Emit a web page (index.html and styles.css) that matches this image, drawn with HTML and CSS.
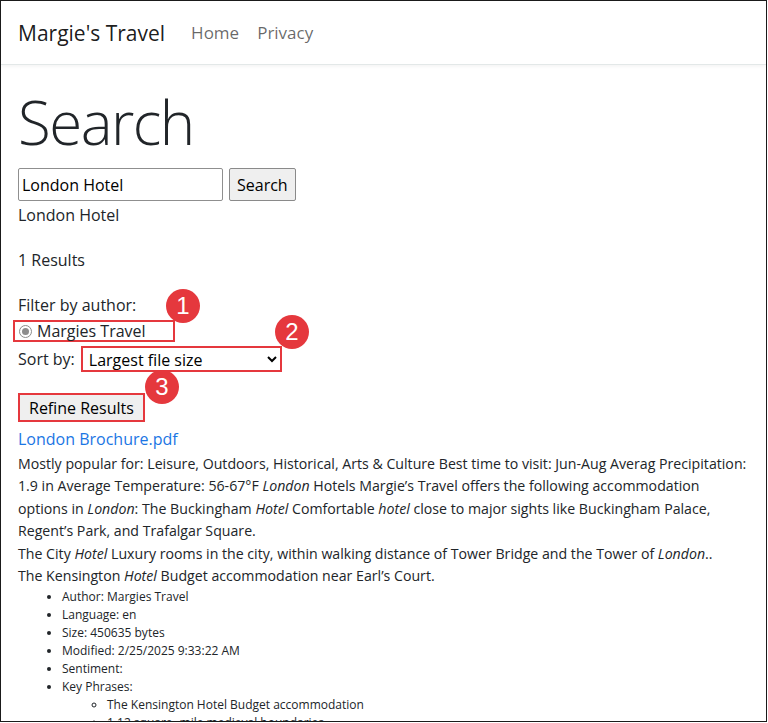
FILE: index.html
```html
<!DOCTYPE html>
<html lang="en">
<head>
<meta charset="utf-8">
<title>Search - Margie's Travel</title>
<link rel="stylesheet" href="styles.css">
</head>
<body>
<div class="frame">
  <header class="navbar">
    <a class="brand" href="#">Margie's Travel</a>
    <nav class="nav">
      <a href="#">Home</a>
      <a href="#">Privacy</a>
    </nav>
  </header>
  <main class="content">
    <h1 class="title">Search</h1>
    <form class="search-form">
      <input class="search-input" type="text" value="London Hotel">
      <button class="btn" type="button">Search</button>
    </form>
    <div class="echo">London Hotel</div>
    <div class="count">1 Results</div>
    <div class="filter-label">Filter by author:</div>
    <div class="annot-row">
      <label class="radio-box">
        <span class="radio"><span class="radio-dot"></span></span>
        <span>Margies Travel</span>
      </label>
      <span class="badge b1">1</span>
    </div>
    <div class="sort-row">
      <span>Sort by:</span>
      <span class="select-wrap">
        <select class="sort-select">
          <option>Largest file size</option>
        </select>
        <span class="badge b2">2</span>
      </span>
    </div>
    <div class="refine-row">
      <button class="btn refine" type="button">Refine Results</button>
      <span class="badge b3">3</span>
    </div>
    <a class="result-link" href="#">London Brochure.pdf</a>
    <div class="summary">
      <p>Mostly popular for: Leisure, Outdoors, Historical, Arts &amp; Culture Best time to visit: Jun-Aug Averag Precipitation: 1.9 in Average Temperature: 56-67°F <em>London</em> Hotels Margie’s Travel offers the following accommodation options in <em>London</em>: The Buckingham <em>Hotel</em> Comfortable <em>hotel</em> close to major sights like Buckingham Palace, Regent’s Park, and Trafalgar Square.</p>
      <p>The City <em>Hotel</em> Luxury rooms in the city, within walking distance of Tower Bridge and the Tower of <em>London</em>..</p>
      <p>The Kensington <em>Hotel</em> Budget accommodation near Earl’s Court.</p>
    </div>
    <ul class="meta">
      <li>Author: Margies Travel</li>
      <li>Language: en</li>
      <li>Size: 450635 bytes</li>
      <li>Modified: 2/25/2025 9:33:22 AM</li>
      <li>Sentiment:</li>
      <li>Key Phrases:
        <ul class="phrases">
          <li>The Kensington Hotel Budget accommodation</li>
          <li>1.12 square -mile medieval boundaries</li>
          <li>Buckingham Palace</li>
        </ul>
      </li>
    </ul>
  </main>
</div>
</body>
</html>
```
FILE: styles.css
```css
html, body {
  margin: 0;
  padding: 0;
  background: #fff;
}
body {
  font-family: "Open Sans", "Noto Sans", sans-serif;
  color: #212529;
  font-size: 16px;
}
.frame {
  width: 767px;
  height: 722px;
  box-sizing: border-box;
  border: 1px solid #1a1a1a;
  overflow: hidden;
}
.navbar {
  display: flex;
  align-items: center;
  height: 63px;
  padding-left: 17px;
  border-bottom: 1px solid #e3e8e8;
  box-shadow: 0 1px 4px rgba(0, 0, 0, 0.06);
}
.brand {
  font-size: 21px;
  color: rgba(0, 0, 0, 0.9);
  text-decoration: none;
  margin-right: 26px;
}
.nav {
  display: flex;
  gap: 18px;
}
.nav a {
  color: rgba(0, 0, 0, 0.6);
  text-decoration: none;
  font-size: 17px;
}
.content {
  padding-left: 17px;
}
.title {
  font-size: 60px;
  font-weight: 300;
  margin: 21px 0 0;
  line-height: 1.2;
  letter-spacing: -1.5px;
}
.search-form {
  display: flex;
  gap: 6px;
  margin-top: 10px;
}
.search-input {
  width: 205px;
  height: 33px;
  box-sizing: border-box;
  border: 1px solid #8f8f8f;
  border-radius: 2px;
  font: inherit;
  font-size: 16px;
  padding: 1px 3px;
  color: #000;
}
.btn {
  font: inherit;
  font-size: 16px;
  color: #000;
  background: #efefef;
  border: 1px solid #8a8a8a;
  border-radius: 2px;
  padding: 0 7px;
  height: 33px;
}
.echo {
  margin-top: 2px;
  line-height: 24px;
}
.count {
  margin-top: 21px;
  line-height: 24px;
}
.filter-label {
  margin-top: 21px;
  line-height: 24px;
}
.annot-row {
  position: relative;
  display: flex;
  margin-top: 3px;
}
.radio-box {
  display: flex;
  align-items: center;
  gap: 5px;
  border: 2px solid #e5383d;
  margin-left: -5px;
  padding: 0 27px 0 4px;
  height: 18px;
  line-height: 18px;
}
.radio {
  width: 11px;
  height: 11px;
  border: 1px solid #8d8d8d;
  border-radius: 50%;
  display: flex;
  align-items: center;
  justify-content: center;
  background: #fff;
}
.radio-dot {
  width: 7px;
  height: 7px;
  border-radius: 50%;
  background: #8d8d8d;
}
.badge {
  position: absolute;
  width: 34px;
  height: 34px;
  border-radius: 50%;
  background: #e5383d;
  color: #fff;
  font-family: "Liberation Sans", Arial, sans-serif;
  font-size: 24px;
  display: flex;
  align-items: center;
  justify-content: center;
}
.b1 { left: 148px; top: -31px; }
.sort-row {
  display: flex;
  align-items: center;
  gap: 6px;
  margin-top: 4px;
}
.select-wrap {
  position: relative;
  display: inline-flex;
}
.sort-select {
  width: 201px;
  height: 26px;
  border: 2px solid #e5383d;
  border-radius: 0;
  font: inherit;
  font-size: 16px;
  color: #000;
  background: #fff;
  padding: 0 0 0 2px;
}
.b2 { left: 194px; top: -31px; }
.refine-row {
  position: relative;
  display: flex;
  margin-top: 21px;
}
.btn.refine {
  height: 29px;
  border: 2px solid #e5383d;
  border-radius: 0;
  padding: 0 9px;
}
.b3 { left: 127px; top: -23px; }
.result-link {
  display: block;
  color: #1b76e4;
  text-decoration: none;
  margin-top: 5px;
  line-height: 24px;
}
.summary {
  font-size: 14.17px;
  line-height: 22.4px;
  margin-top: 2px;
  padding-right: 16px;
}
.summary p {
  margin: 0;
}
.meta {
  font-size: 12px;
  line-height: 18px;
  margin: 1px 0 0;
  padding-left: 44px;
}
.phrases {
  list-style: circle;
  padding-left: 45px;
  margin: 0;
}
```
